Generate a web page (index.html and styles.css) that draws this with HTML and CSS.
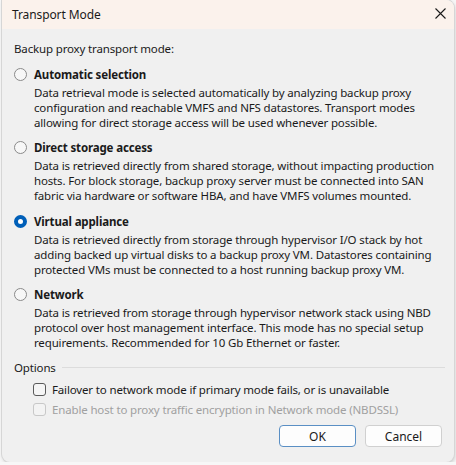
FILE: index.html
```html
<!DOCTYPE html>
<html>
<head>
<meta charset="utf-8">
<link rel="stylesheet" href="styles.css">
</head>
<body>
<div class="dialog">
  <div class="titlebar">
    <span class="title">Transport Mode</span>
    <svg class="close" width="11" height="11" viewBox="0 0 11 11"><path d="M0.5 0.5L10.5 10.5M10.5 0.5L0.5 10.5" stroke="#1a1a1a" stroke-width="1.1" fill="none"/></svg>
  </div>
  <div class="content">
    <div class="lead">Backup proxy transport mode:</div>
    <div class="group">
      <div class="radio-row"><span class="radio"></span><span class="rtitle">Automatic selection</span></div>
      <div class="desc">Data retrieval mode is selected automatically by analyzing backup proxy<br>configuration and reachable VMFS and NFS datastores. Transport modes<br>allowing for direct storage access will be used whenever possible.</div>
    </div>
    <div class="group">
      <div class="radio-row"><span class="radio"></span><span class="rtitle">Direct storage access</span></div>
      <div class="desc">Data is retrieved directly from shared storage, without impacting production<br>hosts. For block storage, backup proxy server must be connected into SAN<br>fabric via hardware or software HBA, and have VMFS volumes mounted.</div>
    </div>
    <div class="group">
      <div class="radio-row"><span class="radio checked"></span><span class="rtitle">Virtual appliance</span></div>
      <div class="desc">Data is retrieved directly from storage through hypervisor I/O stack by hot<br>adding backed up virtual disks to a backup proxy VM. Datastores containing<br>protected VMs must be connected to a host running backup proxy VM.</div>
    </div>
    <div class="group">
      <div class="radio-row"><span class="radio"></span><span class="rtitle">Network</span></div>
      <div class="desc">Data is retrieved from storage through hypervisor network stack using NBD<br>protocol over host management interface. This mode has no special setup<br>requirements. Recommended for 10 Gb Ethernet or faster.</div>
    </div>
    <div class="options-head"><span>Options</span><span class="rule"></span></div>
    <div class="checks">
      <div class="check-row"><span class="check"></span><span>Failover to network mode if primary mode fails, or is unavailable</span></div>
      <div class="check-row disabled"><span class="check"></span><span>Enable host to proxy traffic encryption in Network mode (NBDSSL)</span></div>
    </div>
    <div class="buttons">
      <button class="btn default">OK</button>
      <button class="btn">Cancel</button>
    </div>
  </div>
</div>
</body>
</html>
```
FILE: styles.css
```css
html, body {
  margin: 0;
  padding: 0;
  background: #f7f7f7;
}
body {
  font-family: "Noto Sans", "Open Sans", sans-serif;
  font-size: 11.5px;
  letter-spacing: -0.15px;
  color: #1a1a1a;
}
.dialog {
  margin-left: 2px;
  width: 452px;
  height: 462px;
  background: #f0f0f0;
  border-radius: 0 8px 8px 8px;
  box-shadow: 0 0 0 1px #d6d6d6, 1px 2px 4px rgba(0,0,0,0.18);
  overflow: hidden;
  display: flex;
  flex-direction: column;
}
.titlebar {
  height: 29px;
  background: #fbf2ec;
  display: flex;
  align-items: center;
  justify-content: space-between;
  padding: 0 8px 0 10px;
  flex-shrink: 0;
}
.title {
  font-size: 12px;
  letter-spacing: -0.1px;
  color: #1a1a1a;
}
.close { margin-top: -2px; }
.content {
  padding: 11px 12px 0 12px;
  display: flex;
  flex-direction: column;
}
.lead {
  line-height: 18px;
  margin-bottom: 7px;
}
.group {
  margin-bottom: 9px;
}
.radio-row {
  display: flex;
  align-items: center;
  height: 18px;
}
.radio {
  width: 11px;
  height: 11px;
  border-radius: 50%;
  border: 1px solid #8a8a8a;
  background: #f7f7f7;
  margin: 0 7px 0 0;
  box-sizing: content-box;
}
.radio.checked {
  width: 5px;
  height: 5px;
  border: 4px solid #005fb8;
  background: #ffffff;
}
.rtitle {
  font-weight: 700;
}
.desc {
  margin-top: 1.5px;
  padding-left: 20px;
  line-height: 15px;
  white-space: nowrap;
}
.options-head {
  display: flex;
  align-items: center;
  margin-top: -1px;
  height: 18px;
}
.options-head .rule {
  flex: 1;
  height: 1px;
  background: #dcdcdc;
  margin: 0 -3px 0 6px;
}
.checks {
  margin-top: 3px;
}
.check-row {
  display: flex;
  align-items: center;
  height: 20px;
  padding-left: 19px;
}
.check {
  width: 11px;
  height: 11px;
  border: 1px solid #5a5a5a;
  border-radius: 3px;
  background: #f5f5f5;
  margin-right: 6px;
}
.check-row.disabled { color: #a0a0a0; }
.check-row.disabled .check { border-color: #c8c8c8; background: #f3f3f3; }
.buttons {
  display: flex;
  justify-content: flex-end;
  gap: 9px;
  margin-top: 6px;
}
.btn {
  width: 77px;
  height: 22px;
  font-family: inherit;
  font-size: 12px;
  color: #1a1a1a;
  background: #fdfdfd;
  border: 1px solid #d0d0d0;
  border-radius: 4px;
  padding: 0;
}
.btn.default {
  border-color: #5a8fc4;
}
```
